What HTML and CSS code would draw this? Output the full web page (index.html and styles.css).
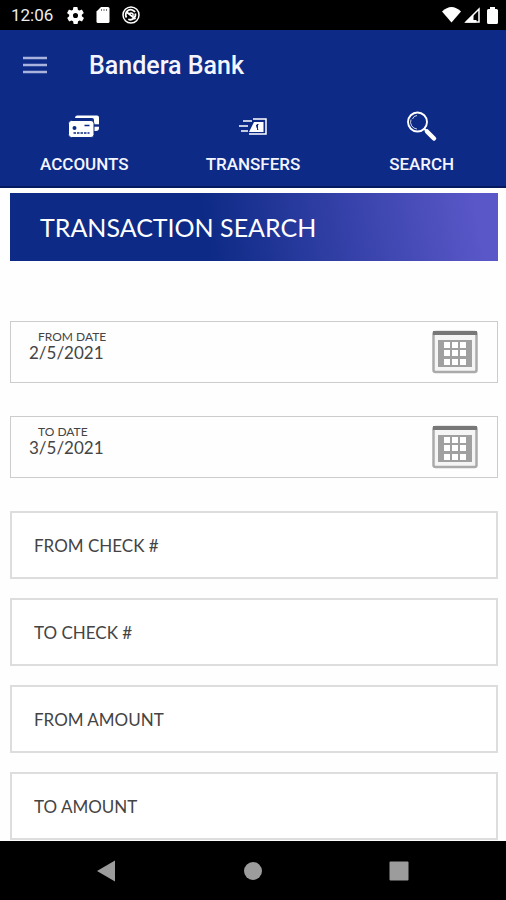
FILE: index.html
```html
<!DOCTYPE html>
<html lang="en">
<head>
<meta charset="utf-8">
<meta name="viewport" content="width=device-width, initial-scale=1">
<title>Bandera Bank</title>
<link rel="stylesheet" href="styles.css">
</head>
<body>
<div class="status">
  <span class="status-time">12:06</span>
  <div class="status-left">
    <svg width="17" height="17" viewBox="2 2 20 20" fill="#fff" aria-hidden="true"><path d="M19.400 13a7.800 7.800 0 0 0 0-2l2.100-1.600a.5.5 0 0 0 .1-.6l-2-3.500a.5.5 0 0 0-.6-.2l-2.500 1a7.300 7.300 0 0 0-1.700-1l-.4-2.600a.5.5 0 0 0-.5-.4h-4a.5.5 0 0 0-.5.400l-.4 2.600a7.300 7.300 0 0 0-1.700 1l-2.500-1a.5.5 0 0 0-.6.200l-2 3.500a.5.5 0 0 0 .1.600L4.600 11a7.800 7.800 0 0 0 0 2l-2.100 1.600a.5.5 0 0 0-.1.600l2 3.500c.1.200.4.300.6.200l2.500-1a7.300 7.300 0 0 0 1.700 1l.4 2.600c0 .2.200.4.500.4h4c.2 0 .5-.2.500-.4l.4-2.600a7.300 7.300 0 0 0 1.700-1l2.500 1c.2.100.5 0 .6-.2l2-3.500a.5.5 0 0 0-.1-.6zM12 15a3 3 0 1 1 0-6 3 3 0 0 1 0 6z"/></svg>
    <svg width="14" height="16" viewBox="0 0 14 16" aria-hidden="true"><path fill="#fff" d="M5 0h7q1.500 0 1.500 1.500v13q0 1.500-1.500 1.500H2Q.5 16 .5 14.500V4.500z"/><path stroke="#777" stroke-width="1" d="M5.500 2v2M8 2v2M10.500 2v2"/></svg>
    <svg width="18" height="18" viewBox="0 0 18 18" fill="none" stroke="#fff" aria-hidden="true"><circle cx="9" cy="9" r="8" stroke-width="1.500"/><path stroke-width="1.800" d="M4.500 11.500a5 5 0 0 1 8.500-5.500M13.300 7.500a5 5 0 0 1-7 5.700M4.500 6l9 7"/><path stroke-width="1.500" d="M7 8q2-2 4 0v2"/></svg>
  </div>
  <div class="status-right">
    <svg width="19" height="16" viewBox="0 0 19 16" aria-hidden="true"><path fill="#fff" d="M0 4.500Q9.500-4.500 19 4.500L9.500 15.500z"/></svg>
    <svg width="16" height="16" viewBox="0 0 16 16" fill="none" stroke="#fff" aria-hidden="true"><path stroke-width="1.500" d="M2 15 15 2v13z"/><path fill="#fff" stroke="none" d="M1 15.500 9.500 7v6h3v2.500z"/></svg>
    <svg width="11" height="17" viewBox="0 0 11 17" aria-hidden="true"><path fill="#fff" d="M3 0h5v2h1.500Q11 2 11 3.500v12Q11 17 9.500 17h-8Q0 17 0 15.500v-12Q0 2 1.500 2H3z"/></svg>
  </div>
</div>
<header class="header">
  <div class="appbar">
    <button class="menu" type="button" aria-label="Menu">
      <svg width="24" height="18" viewBox="0 0 24 18" stroke="#a9b3dd" stroke-width="2.400" aria-hidden="true"><path d="M0 2h24M0 9h24M0 16h24"/></svg>
    </button>
    <h1 class="brand">Bandera Bank</h1>
  </div>
  <nav class="tabs">
    <a class="tab" href="#accounts">
      <svg width="32" height="32" viewBox="0 0 32 32" aria-hidden="true"><path fill="#fff" d="M9 5.500h20q2 0 2 2V18q0 3-3 3h-2V10q0-2-2-2H7q0-2.500 2-2.500z"/><path stroke="#0d2a86" stroke-width="2.400" d="M24 15.500h8"/><rect x=".5" y="10.500" width="25.500" height="17" rx="3" fill="#fff" stroke="#0d2a86" stroke-width="1"/><circle cx="6.500" cy="18" r="2" fill="#0d2a86"/><path stroke="#0d2a86" stroke-width="1.500" d="M16.500 15.500h5"/><path stroke="#0d2a86" stroke-width="1.300" stroke-dasharray="2.500 1" d="M5.500 23h16"/></svg>
      <span>ACCOUNTS</span>
    </a>
    <a class="tab" href="#transfers">
      <svg width="32" height="32" viewBox="0 0 32 32" fill="none" stroke="#fff" aria-hidden="true"><path stroke-width="1.300" d="M6 11h9M2 16h9M4 21h7"/><path stroke-width="1.500" d="M16 9h13v15H12"/><path fill="#fff" stroke="none" d="M17 12h9.500v10H12z"/><path stroke="#0d2a86" stroke-width="1" d="M21.500 14.500q-3 0-2 2t1.500 3M20.500 14v6"/></svg>
      <span>TRANSFERS</span>
    </a>
    <a class="tab" href="#search" aria-current="page">
      <svg width="32" height="32" viewBox="0 0 32 32" fill="none" stroke="#fff" aria-hidden="true"><circle cx="11.500" cy="12" r="9.500" stroke-width="1.900"/><path stroke-width=".8" d="M5 9.500a7 7 0 0 0 6 9.500M6.500 9A5 5 0 0 1 11 5.500"/><path stroke-width="2" d="m18 18.500 3 3"/><path stroke-width="4.500" stroke-linecap="round" d="m21 21.500 7 7"/></svg>
      <span>SEARCH</span>
    </a>
  </nav>
</header>
<main class="content">
  <h2 class="banner">TRANSACTION SEARCH</h2>
  <form class="form">
    <div class="dates">
      <div class="date">
        <div class="date-text">
          <label for="from-date">FROM DATE</label>
          <input id="from-date" type="text" value="2/5/2021">
        </div>
        <button class="calendar" type="button" aria-label="Choose from date">
          <svg width="46" height="44" viewBox="0 0 46 44" aria-hidden="true"><rect x="1.500" y="2" width="43" height="40" rx="2" fill="#f5f5f5" stroke="#aaa" stroke-width="2.500"/><path fill="#777" d="M1 1h44v4H1z"/><path fill="#a0a0a0" d="M6 10h34v27H6z"/><path fill="#fff" d="M12 12h6v6h-6zm8 0h6v6h-6zm8 0h6v6h-6zM12 20h6v6h-6zm8 0h6v6h-6zm8 0h6v6h-6zM12 29h6v6h-6zm8 0h6v6h-6zm8 0h6v6h-6z"/></svg>
        </button>
      </div>
      <div class="date">
        <div class="date-text">
          <label for="to-date">TO DATE</label>
          <input id="to-date" type="text" value="3/5/2021">
        </div>
        <button class="calendar" type="button" aria-label="Choose to date">
          <svg width="46" height="44" viewBox="0 0 46 44" aria-hidden="true"><rect x="1.500" y="2" width="43" height="40" rx="2" fill="#f5f5f5" stroke="#aaa" stroke-width="2.500"/><path fill="#777" d="M1 1h44v4H1z"/><path fill="#a0a0a0" d="M6 10h34v27H6z"/><path fill="#fff" d="M12 12h6v6h-6zm8 0h6v6h-6zm8 0h6v6h-6zM12 20h6v6h-6zm8 0h6v6h-6zm8 0h6v6h-6zM12 29h6v6h-6zm8 0h6v6h-6zm8 0h6v6h-6z"/></svg>
        </button>
      </div>
    </div>
    <div class="fields">
      <input class="field" type="text" placeholder="FROM CHECK #" aria-label="From check number">
      <input class="field" type="text" placeholder="TO CHECK #" aria-label="To check number">
      <input class="field" type="text" placeholder="FROM AMOUNT" aria-label="From amount">
      <input class="field" type="text" placeholder="TO AMOUNT" aria-label="To amount">
    </div>
  </form>
</main>
<footer class="system">
  <button type="button" aria-label="Back"><svg width="20" height="22" viewBox="0 0 20 22" aria-hidden="true"><path fill="#9c9c9c" d="M19 .5v21L1 11z"/></svg></button>
  <button type="button" aria-label="Home"><svg width="20" height="20" viewBox="0 0 20 20" aria-hidden="true"><circle cx="10" cy="10" r="9" fill="#9c9c9c"/></svg></button>
  <button type="button" aria-label="Recent apps"><svg width="20" height="20" viewBox="0 0 20 20" aria-hidden="true"><rect x=".5" y=".5" width="19" height="19" rx="1" fill="#9c9c9c"/></svg></button>
</footer>
</body>
</html>
```
FILE: styles.css
```css
* {
  box-sizing: border-box;
}

body {
  margin: 0;
  min-height: 100vh;
  display: flex;
  flex-direction: column;
  background: #fefefe;
  color: #444;
  font-family: Lato, "Liberation Sans", sans-serif;
}

svg {
  display: block;
  flex: none;
}

button {
  padding: 0;
  border: 0;
  background: none;
}

.status {
  display: flex;
  align-items: center;
  height: 30px;
  padding: 0 8px 0 11px;
  background: #000;
  color: #eee;
  font: 17px/30px Roboto, sans-serif;
}

.status-left,
.status-right {
  display: flex;
  align-items: center;
}

.status-left {
  gap: 12px;
  margin-left: 14px;
}

.status-right {
  gap: 3px;
  margin-left: auto;
}

.status-right svg:last-child {
  margin-left: 4px;
}

.header {
  background: #0d2a86;
  border-bottom: 2px solid #06195f;
  color: #f4f5ff;
  font-family: Roboto, sans-serif;
}

.appbar {
  display: flex;
  align-items: center;
  gap: 42px;
  height: 70px;
  padding: 0 23px;
}

.brand {
  margin: 0;
  font-size: 25px;
  font-weight: 500;
}

.tabs {
  display: grid;
  grid-template-columns: repeat(3, 1fr);
  padding: 10px 0 11px;
}

.tab {
  display: flex;
  flex-direction: column;
  align-items: center;
  gap: 11px;
  color: inherit;
  font-size: 17px;
  font-weight: 500;
  line-height: 22px;
  text-decoration: none;
}

.content {
  flex: 1;
  padding: 5px 8px 0 10px;
}

.banner {
  margin: 0 0 60px;
  padding: 0 30px;
  background: linear-gradient(80deg, #0d2a86 40%, #5a57c8 95%);
  color: #fff;
  font-size: 25px;
  font-weight: 400;
  line-height: 68px;
}

.dates {
  display: grid;
  gap: 33px;
  margin-bottom: 33px;
}

.date {
  display: flex;
  align-items: center;
  justify-content: space-between;
  height: 62px;
  padding: 0 19px 0 18px;
  border: 1px solid #ccc;
}

.date-text {
  display: flex;
  flex: 1;
  flex-direction: column;
  align-self: flex-start;
  min-width: 0;
  padding-top: 8px;
}

.date-text label {
  padding-left: 9px;
  font-size: 12px;
  line-height: 14px;
}

.date-text input {
  width: 100%;
  padding: 0;
  border: 0;
  background: none;
  color: #444;
  font: 17px/18px Lato, sans-serif;
}

.fields {
  display: grid;
  gap: 19px;
}

.field {
  width: 100%;
  height: 68px;
  padding: 0 22px;
  border: 2px solid #ddd;
  border-radius: 0;
  background: #fff;
  color: #444;
  font: 17px Lato, sans-serif;
}

.field::placeholder {
  color: #444;
  opacity: 1;
}

.system {
  position: sticky;
  bottom: 0;
  display: flex;
  align-items: center;
  justify-content: space-between;
  height: 59px;
  padding: 0 97px 0 96px;
  background: #000;
}
```
